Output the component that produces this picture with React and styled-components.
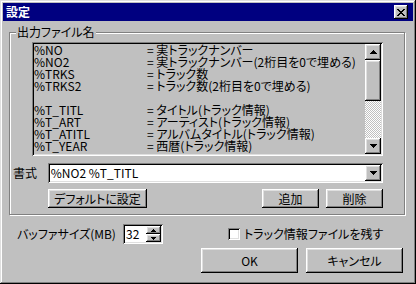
import styled, { createGlobalStyle } from 'styled-components';

const GlobalStyle = createGlobalStyle`
  html, body {
    margin: 0;
    padding: 0;
    background: #c0c0c0;
  }
`;

const raised = `
  box-shadow: inset -1px -1px #000, inset 1px 1px #fff, inset -2px -2px #808080, inset 2px 2px #dfdfdf;
`;

const sunken = `
  box-shadow: inset 1px 1px #808080, inset -1px -1px #fff, inset 2px 2px #000, inset -2px -2px #dfdfdf;
`;

const Dialog = styled.div`
  width: 416px;
  height: 284px;
  box-sizing: border-box;
  padding: 3px;
  background: #c0c0c0;
  box-shadow: inset -1px -1px #000, inset 1px 1px #dfdfdf, inset -2px -2px #808080, inset 2px 2px #fff;
  display: flex;
  flex-direction: column;
  font-family: "Noto Sans CJK JP", sans-serif;
  font-size: 12px;
  font-feature-settings: "palt";
  color: #000;
  line-height: 14px;
`;

const TitleBar = styled.div`
  height: 18px;
  background: #000080;
  color: #fff;
  font-weight: bold;
  display: flex;
  align-items: center;
  justify-content: space-between;
  padding-left: 3px;
`;

const CloseButton = styled.div`
  width: 14px;
  height: 14px;
  margin-right: 5px;
  background: #c0c0c0;
  display: flex;
  align-items: center;
  justify-content: center;
  ${raised}
`;

const Body = styled.div`
  flex: 1;
  display: flex;
  flex-direction: column;
  padding: 4px 7px 0 6px;
`;

const Group = styled.fieldset`
  margin: 0;
  width: 396px;
  box-sizing: border-box;
  border: 1px solid #808080;
  box-shadow: inset 1px 1px #fff, 1px 1px #fff;
  padding: 3px 21px 6px 3px;
  min-width: 0;
`;

const Legend = styled.legend`
  margin-left: 3px;
  padding: 0 1px;
  line-height: 14px;
  background: #c0c0c0;
`;

const ListBox = styled.div`
  margin-left: 19px;
  height: 114px;
  display: flex;
  background: #c0c0c0;
  padding: 2px;
  box-sizing: border-box;
  ${sunken}
`;

const ListRows = styled.ul`
  flex: 1;
  margin: 0;
  padding: 0;
  list-style: none;
`;

const Row = styled.li`
  height: 12px;
  line-height: 12px;
  display: flex;
  white-space: nowrap;
`;

const VarName = styled.span`
  width: 113px;
`;

const ScrollBar = styled.div`
  width: 16px;
  display: flex;
  flex-direction: column;
`;

const ArrowButton = styled.div`
  width: 16px;
  height: 16px;
  background: #c0c0c0;
  display: flex;
  align-items: center;
  justify-content: center;
  flex-shrink: 0;
  ${raised}
`;

const Thumb = styled.div`
  height: 41px;
  background: #c0c0c0;
  ${raised}
`;

const Track = styled.div`
  flex: 1;
  background: repeating-conic-gradient(#fff 0 25%, #c0c0c0 0 50%) 0 0 / 2px 2px;
`;

const FormatRow = styled.div`
  display: flex;
  align-items: center;
  margin-top: 7px;
`;

const FieldLabel = styled.span`
  width: 35px;
`;

const Combo = styled.div`
  width: 337px;
  height: 20px;
  box-sizing: border-box;
  padding: 2px;
  background: #fff;
  display: flex;
  align-items: center;
  ${sunken}
`;

const ComboText = styled.span`
  flex: 1;
  padding-left: 1px;
`;

const ButtonRow = styled.div`
  display: flex;
  margin: 6px 0 0 35px;
  gap: 7px;
`;

const Button = styled.div`
  width: ${(p) => p.$w}px;
  height: ${(p) => p.$h || 19}px;
  box-sizing: border-box;
  display: flex;
  align-items: center;
  justify-content: center;
  background: #c0c0c0;
  margin-left: ${(p) => (p.$push ? 'auto' : '0')};
  white-space: nowrap;
  ${raised}
`;

const Bottom = styled.div`
  display: flex;
  flex-direction: column;
  margin-top: 9px;
`;

const OptionRow = styled.div`
  display: flex;
  align-items: center;
  height: 20px;
`;

const BufferLabel = styled.span`
  margin-left: 8px;
  width: 106px;
  white-space: nowrap;
`;

const Spin = styled.div`
  width: 40px;
  height: 20px;
  box-sizing: border-box;
  padding: 2px;
  background: #fff;
  display: flex;
  ${sunken}
`;

const SpinText = styled.span`
  flex: 1;
  padding: 1px 0 0 1px;
`;

const SpinButtons = styled.div`
  width: 15px;
  display: flex;
  flex-direction: column;
`;

const SpinButton = styled.div`
  flex: 1;
  background: #c0c0c0;
  display: flex;
  align-items: center;
  justify-content: center;
  ${raised}
`;

const CheckOption = styled.label`
  display: flex;
  align-items: center;
  gap: 4px;
  margin-left: 65px;
  white-space: nowrap;
`;

const CheckBox = styled.span`
  width: 12px;
  height: 12px;
  background: #fff;
  box-sizing: border-box;
  ${sunken}
`;

const ActionRow = styled.div`
  display: flex;
  justify-content: flex-end;
  gap: 8px;
  margin-top: 4px;
  padding-right: 3px;
`;

const Up = () => (
  <svg width="7" height="4" viewBox="0 0 7 4">
    <path d="M3 0h1v1h1v1h1v1h1v1H0V3h1V2h1V1h1z" fill="#000" />
  </svg>
);

const Down = () => (
  <svg width="7" height="4" viewBox="0 0 7 4">
    <path d="M0 0h7v1H6v1H5v1H4v1H3V3H2V2H1V1H0z" fill="#000" />
  </svg>
);

const SmallUp = () => (
  <svg width="5" height="3" viewBox="0 0 5 3">
    <path d="M2 0h1v1h1v1h1v1H0V2h1V1h1z" fill="#000" />
  </svg>
);

const SmallDown = () => (
  <svg width="5" height="3" viewBox="0 0 5 3">
    <path d="M0 0h5v1H4v1H3v1H2V2H1V1H0z" fill="#000" />
  </svg>
);

const variables = [
  ['%NO', '実トラックナンバー'],
  ['%NO2', '実トラックナンバー(2桁目を0で埋める)'],
  ['%TRKS', 'トラック数'],
  ['%TRKS2', 'トラック数(2桁目を0で埋める)'],
  null,
  ['%T_TITL', 'タイトル(トラック情報)'],
  ['%T_ART', 'アーティスト(トラック情報)'],
  ['%T_ATITL', 'アルバムタイトル(トラック情報)'],
  ['%T_YEAR', '西暦(トラック情報)'],
];

const App = () => {
  return (
    <>
      <GlobalStyle />
      <Dialog>
        <TitleBar>
          <span>設定</span>
          <CloseButton>
            <svg width="8" height="7" viewBox="0 0 8 7">
              <path
                d="M0 0h2v1h1v1h2V1h1V0h2v1H7v1H6v1H5v1h1v1h1v1h1v1H6V6H5V5H3v1H2v1H0V6h1V5h1V4h1V3H2V2H1V1H0z"
                fill="#000"
              />
            </svg>
          </CloseButton>
        </TitleBar>
        <Body>
          <Group>
            <Legend>出力ファイル名</Legend>
            <ListBox>
              <ListRows>
                {variables.map((v, i) => (
                  <Row key={i}>
                    {v && (
                      <>
                        <VarName>{v[0]}</VarName>
                        <span>= {v[1]}</span>
                      </>
                    )}
                  </Row>
                ))}
              </ListRows>
              <ScrollBar>
                <ArrowButton>
                  <Up />
                </ArrowButton>
                <Thumb />
                <Track />
                <ArrowButton>
                  <Down />
                </ArrowButton>
              </ScrollBar>
            </ListBox>
            <FormatRow>
              <FieldLabel>書式</FieldLabel>
              <Combo>
                <ComboText>%NO2 %T_TITL</ComboText>
                <ArrowButton>
                  <Down />
                </ArrowButton>
              </Combo>
            </FormatRow>
            <ButtonRow>
              <Button $w={99}>デフォルトに設定</Button>
              <Button $w={57} $push>
                追加
              </Button>
              <Button $w={57}>削除</Button>
            </ButtonRow>
          </Group>
          <Bottom>
            <OptionRow>
              <BufferLabel>バッファサイズ(MB)</BufferLabel>
              <Spin>
                <SpinText>32</SpinText>
                <SpinButtons>
                  <SpinButton>
                    <SmallUp />
                  </SpinButton>
                  <SpinButton>
                    <SmallDown />
                  </SpinButton>
                </SpinButtons>
              </Spin>
              <CheckOption>
                <CheckBox />
                トラック情報ファイルを残す
              </CheckOption>
            </OptionRow>
            <ActionRow>
              <Button $w={97} $h={25}>
                OK
              </Button>
              <Button $w={97} $h={25}>
                キャンセル
              </Button>
            </ActionRow>
          </Bottom>
        </Body>
      </Dialog>
    </>
  );
};

export default App;
